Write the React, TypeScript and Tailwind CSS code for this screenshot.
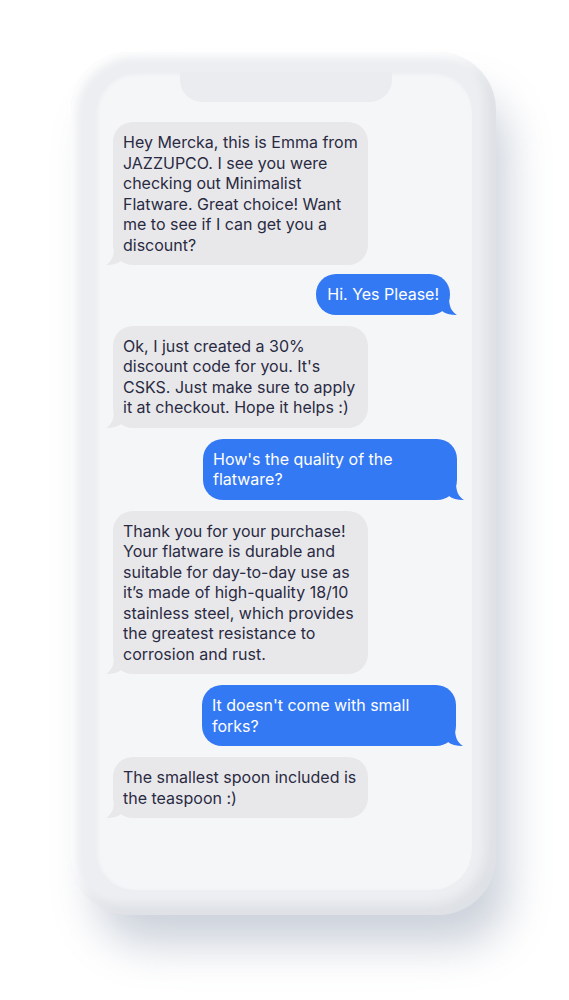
import React from 'react';

type Msg = { from: 'them' | 'me'; text: string; wide?: boolean; mr?: string };

const messages: Msg[] = [
    {
        from: 'them',
        text: 'Hey Mercka, this is Emma from\nJAZZUPCO. I see you were\nchecking out Minimalist\nFlatware. Great choice! Want\nme to see if I can get you a\ndiscount?',
    },
    { from: 'me', text: 'Hi. Yes Please!', mr: 'mr-[7px] -mt-[2px]' },
    {
        from: 'them',
        text: "Ok, I just created a 30%\ndiscount code for you. It's\nCSKS. Just make sure to apply\nit at checkout. Hope it helps :)",
    },
    { from: 'me', text: "How's the quality of the\nflatware?", wide: true, mr: 'mr-0' },
    {
        from: 'them',
        text: 'Thank you for your purchase!\nYour flatware is durable and\nsuitable for day-to-day use as\nit’s made of high-quality 18/10\nstainless steel, which provides\nthe greatest resistance to\ncorrosion and rust.',
    },
    { from: 'me', text: "It doesn't come with small\nforks?", wide: true, mr: 'mr-[1px]' },
    { from: 'them', text: 'The smallest spoon included is\nthe teaspoon :)' },
];

function Tail({ side, color }: { side: 'left' | 'right'; color: string }) {
    // little iMessage style tail hanging off the bottom corner
    return (
        <svg
            width="20"
            height="18"
            viewBox="0 0 20 18"
            className={
                side === 'right'
                    ? 'absolute -right-[7px] bottom-0'
                    : 'absolute -left-[7px] bottom-0 -scale-x-100'
            }
        >
            <path d="M0 0 H12 C12 9 14 14 20 18 C13 18 8 16.5 5 14 C3 15.5 1 16 0 16 Z" fill={color} />
        </svg>
    );
}

function Bubble({ msg }: { msg: Msg }) {
    if (msg.from === 'me') {
        return (
            <div className={`self-end relative ${msg.mr ?? ''}`}>
                <div
                    className={`relative z-10 rounded-[20px] bg-[#3479f4] text-white px-[11px] py-[10px] whitespace-pre-line ${
                        msg.wide ? 'w-[254px] pl-[10px]' : 'w-fit'
                    }`}
                >
                    {msg.text}
                </div>
                <Tail side="right" color="#3479f4" />
            </div>
        );
    }
    return (
        <div className="self-start relative">
            <div className="relative z-10 rounded-[20px] bg-[#e8e8eb] text-[#2a2b42] px-[10px] py-[10px] whitespace-pre-line w-[255px]">
                {msg.text}
            </div>
            <Tail side="left" color="#e8e8eb" />
        </div>
    );
}

export default function App() {
    return (
        <div className="w-[569px] h-[1000px] bg-white overflow-hidden" style={{ fontFamily: 'Inter, "Noto Sans", sans-serif' }}>
            {/* Phone body */}
            <div className="ml-[71px] mt-[52px] w-[425px] h-[863px] rounded-[58px] bg-[#eceef1] pt-[20px] pl-[24px] pr-[24px] pb-[25px] shadow-[18px_36px_44px_-6px_rgba(96,114,142,0.32),inset_-10px_-10px_10px_rgba(120,130,145,0.12),inset_5px_5px_8px_rgba(255,255,255,0.9)]">
                {/* Screen */}
                <div className="relative w-full h-full rounded-[40px] bg-[#f5f6f8] shadow-[inset_2px_2px_4px_rgba(120,130,145,0.08)]">
                    {/* Notch */}
                    <div className="absolute left-[85px] top-0 w-[212px] h-[30px] rounded-b-[22px] bg-[#ebecef]" />

                    <div className="flex flex-col gap-[11px] pt-[50px] pl-[18px] pr-[15px] text-[16px] leading-[20.5px]">
                        {messages.map((m, i) => (
                            <Bubble key={i} msg={m} />
                        ))}
                    </div>
                </div>
            </div>
        </div>
    );
}
